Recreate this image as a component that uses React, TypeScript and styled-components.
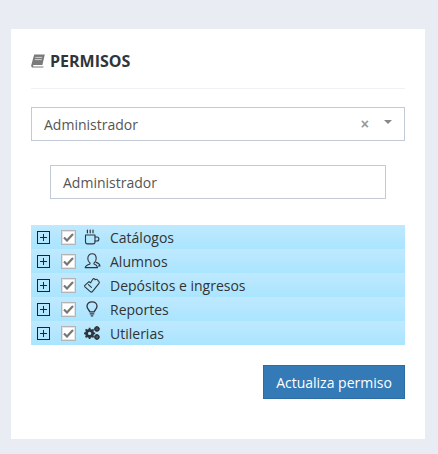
import React from 'react';
import styled, { createGlobalStyle } from 'styled-components';

const Global = createGlobalStyle`
  html, body {
    margin: 0;
    padding: 0;
    background: #e9ecf3;
  }
  * {
    box-sizing: border-box;
  }
`;

const Page = styled.div`
  width: 438px;
  height: 454px;
  padding: 29px 11px 15px;
  font-family: 'Open Sans', sans-serif;
  overflow: hidden;
`;

const Portlet = styled.div`
  width: 414px;
  height: 410px;
  background: #fff;
  padding: 0 20px;
`;

const Header = styled.div`
  height: 60px;
  display: flex;
  align-items: center;
  gap: 5px;
  border-bottom: 1px solid #eef1f5;
  padding-top: 4px;
  color: #2f353b;
`;

const Title = styled.h1`
  margin: 0;
  font-size: 16px;
  font-weight: 700;
  line-height: 20px;
`;

const Select = styled.div`
  height: 34px;
  margin-top: 18px;
  border: 1px solid #c2cad8;
  display: flex;
  align-items: center;
  padding: 0 12px;
  font-size: 14px;
  color: #555;
`;

const SelectText = styled.span`
  flex: 1;
`;

const Clear = styled.span`
  font-family: 'Liberation Sans', sans-serif;
  font-size: 14px;
  font-weight: 700;
  color: #999;
  margin-right: 15px;
  line-height: 1;
`;

const Arrow = styled.span`
  width: 0;
  height: 0;
  margin: 0 0 4px 0;
  border-left: 4px solid transparent;
  border-right: 4px solid transparent;
  border-top: 4px solid #888;
`;

const Input = styled.div`
  width: 336px;
  height: 34px;
  margin: 24px 0 0 19px;
  border: 1px solid #c2cad8;
  display: flex;
  align-items: center;
  padding: 0 12px;
  font-size: 14px;
  color: #555;
`;

const Tree = styled.ul`
  list-style: none;
  margin: 26px 0 0;
  padding: 0;
`;

const Node = styled.li`
  height: 24px;
  display: flex;
  align-items: center;
  padding-left: 6px;
  background: linear-gradient(#bfe9fe, #a9e5ff);
  font-size: 14px;
  color: #333;
`;

const Expander = styled.span`
  position: relative;
  width: 13px;
  height: 13px;
  border: 1px solid #222;
  &::before {
    content: '';
    position: absolute;
    left: 2px;
    right: 2px;
    top: 5px;
    border-top: 1px solid #222;
  }
  &::after {
    content: '';
    position: absolute;
    top: 2px;
    bottom: 2px;
    left: 5px;
    border-left: 1px solid #222;
  }
`;

const Check = styled.span`
  width: 15px;
  height: 15px;
  margin-left: 11px;
  border: 1px solid #b4b4b4;
  box-shadow: inset 0 0 0 1px #e4e4e4;
  background: #fff;
  display: flex;
  align-items: center;
  justify-content: center;
`;

const IconSlot = styled.span`
  width: 18px;
  height: 18px;
  margin-left: 7px;
  display: flex;
  align-items: center;
  justify-content: center;
  color: #2f353b;
`;

const Label = styled.span`
  margin-left: 9px;
`;

const Actions = styled.div`
  display: flex;
  justify-content: flex-end;
  margin-top: 20px;
`;

const Button = styled.button`
  height: 34px;
  width: 142px;
  padding: 0;
  border: 1px solid #2e6da4;
  border-radius: 0;
  background: #337ab7;
  color: #fff;
  font-family: inherit;
  font-size: 14px;
`;

const Line = { fill: 'none', stroke: 'currentColor', strokeWidth: 1.1, strokeLinecap: 'round', strokeLinejoin: 'round' } as const;

const BookIcon = () => (
  <svg width="14" height="14" viewBox="0 0 14 14">
    <path d="M3.2 .6H13.8L11.4 11H2.8C1.7 11 1.7 12.4 2.8 12.4H12.6L12.2 13.6H2C.6 13.6 -.1 12.4 .3 11Z" fill="#7a7a7a" />
    <path d="M4.4 3.4H11.2M3.9 5.6H10.7" stroke="#d2d2d2" strokeWidth="1" />
  </svg>
);

const CupIcon = () => (
  <svg width="16" height="16" viewBox="0 0 16 16">
    <path d="M1.5 6H11V12.8C11 14.1 10.2 14.9 9 14.9H3.5C2.3 14.9 1.5 14.1 1.5 12.8Z" {...Line} />
    <path d="M11 8H13C15.5 8 15.5 12 13 12H11" {...Line} />
    <path d="M3.4 1V3.8M6.2 1V3.8M9 1V3.8" {...Line} strokeWidth={1.2} />
  </svg>
);

const UsersIcon = () => (
  <svg width="17" height="16" viewBox="0 0 17 16">
    <path d="M6 10C4.6 9.2 3.8 7.4 3.8 5.6C3.8 2.6 5.6 .8 8 .8C10.4 .8 12.2 2.6 12.2 5.6C12.2 7.4 11.4 9.2 10 10V11C11.8 11.6 13.2 12.6 13.6 14.6H1.2C1.6 12.6 4.2 11.6 6 11Z" {...Line} />
    <path d="M12 9.4C14 9.8 15.6 11 16 13H14.4" {...Line} />
  </svg>
);

const TagHeartIcon = () => (
  <svg width="16" height="16" viewBox="0 0 16 16">
    <path d="M.9 8.4L5 4.6L6.6 5.8L8.8 2.2C9.6 1.2 11 1.6 11 2.8C12.2 1.8 14 2.4 14 3.8C15.2 4.2 15.6 5.6 14.8 6.6L8.2 14.8C7.7 15.2 7.1 15.2 6.6 14.8L.9 9.8C.6 9.4 .6 8.8 .9 8.4Z" {...Line} />
    <path d="M4.4 7.6L7.4 10.4" {...Line} />
  </svg>
);

const BulbIcon = () => (
  <svg width="12" height="16" viewBox="0 0 12 16">
    <path d="M3.8 10.8C3.6 9.2 1 8.2 1 5.2C1 2.6 3.2 .8 6 .8C8.8 .8 11 2.6 11 5.2C11 8.2 8.4 9.2 8.2 10.8Z" {...Line} strokeWidth={1.3} />
    <path d="M4.2 12.8H7.8M5.2 14.8H6.8" {...Line} strokeWidth={1.3} />
  </svg>
);

const CogsIcon = () => (
  <svg width="16" height="14" viewBox="0 0 16 14">
    <circle cx="5.6" cy="7.4" r="3.2" fill="none" stroke="currentColor" strokeWidth="2.6" />
    <path d="M5.6 1.8V13M0 7.4H11.2M1.6 3.4 9.6 11.4M9.6 3.4 1.6 11.4" stroke="currentColor" strokeWidth="1.8" />
    <circle cx="5.6" cy="7.4" r="1.6" fill="#b4e7fe" />
    <circle cx="12.9" cy="2.9" r="1.9" fill="none" stroke="currentColor" strokeWidth="1.5" />
    <path d="M12.9 0V5.8M10 2.9H15.8" stroke="currentColor" strokeWidth="1.1" />
    <circle cx="12.9" cy="11" r="1.9" fill="none" stroke="currentColor" strokeWidth="1.5" />
    <path d="M12.9 8.1V13.9M10 11H15.8" stroke="currentColor" strokeWidth="1.1" />
  </svg>
);

const nodes = [
  { label: 'Catálogos', Icon: CupIcon },
  { label: 'Alumnos', Icon: UsersIcon },
  { label: 'Depósitos e ingresos', Icon: TagHeartIcon },
  { label: 'Reportes', Icon: BulbIcon },
  { label: 'Utilerias', Icon: CogsIcon },
];

export default function App() {
  return (
    <Page>
      <Global />
      <Portlet>
        <Header>
          <BookIcon />
          <Title>PERMISOS</Title>
        </Header>
        <Select>
          <SelectText>Administrador</SelectText>
          <Clear>×</Clear>
          <Arrow />
        </Select>
        <Input>Administrador</Input>
        <Tree>
          {nodes.map(({ label, Icon }) => (
            <Node key={label}>
              <Expander />
              <Check>
                <svg width="11" height="9" viewBox="0 0 11 9">
                  <path d="M1 4.5 4 7.5 10 1" fill="none" stroke="#777" strokeWidth="2.2" />
                </svg>
              </Check>
              <IconSlot>
                <Icon />
              </IconSlot>
              <Label>{label}</Label>
            </Node>
          ))}
        </Tree>
        <Actions>
          <Button>Actualiza permiso</Button>
        </Actions>
      </Portlet>
    </Page>
  );
}
